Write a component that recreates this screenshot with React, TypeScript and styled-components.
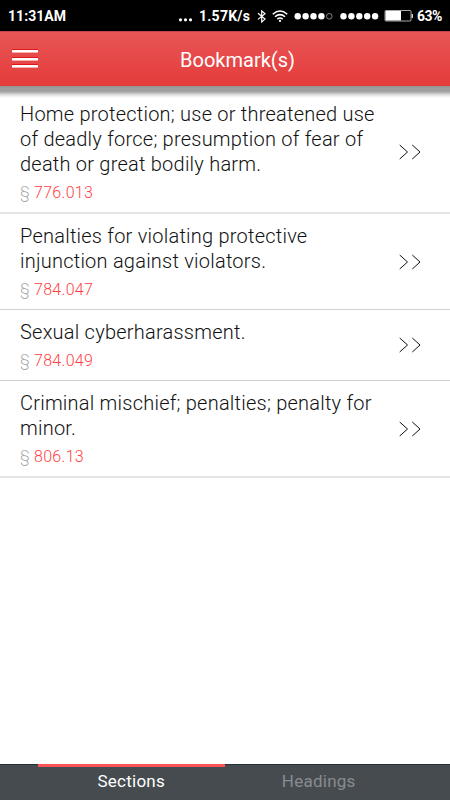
import React from 'react';
import styled, { createGlobalStyle } from 'styled-components';

const GlobalStyle = createGlobalStyle`
  * { box-sizing: border-box; }
  body { margin: 0; background: #fff; font-family: Roboto, sans-serif; }
`;

const Screen = styled.div`
  width: 450px;
  height: 800px;
  display: flex;
  flex-direction: column;
  overflow: hidden;
  background: #fff;
`;

const StatusBar = styled.div`
  flex: none;
  height: 31px;
  padding: 2px 8px 0;
  display: flex;
  align-items: center;
  background: #000;
  color: #fff;
  font-size: 14px;
  font-weight: 700;
  line-height: 29px;
  white-space: nowrap;
`;

const Clock = styled.span`
  flex: 1;
  letter-spacing: 0.05px;
`;

const Speed = styled.span`
  width: 51px;
  margin-left: 6px;
  letter-spacing: 0.25px;
`;

const StatusIcon = styled.svg<{ $gap: number }>`
  display: block;
  flex: none;
  margin-left: ${(p) => p.$gap}px;
`;

const Percent = styled.span`
  width: 25px;
  margin-left: 3px;
  font-size: 14px;
  letter-spacing: -0.55px;
`;

const Header = styled.header`
  flex: none;
  height: 55px;
  display: grid;
  grid-template-columns: 25px 1fr;
  align-items: center;
  padding: 1px 12px 0;
  color: #fff;
  background: linear-gradient(#e85555, #e53b3b);
  border-top: 1px solid #c94646;
`;

const MenuButton = styled.button`
  width: 26px;
  height: 19px;
  margin-bottom: 2px;
  padding: 0;
  border: 0;
  background: none;
  display: flex;
  flex-direction: column;
  justify-content: space-between;
`;

const MenuLine = styled.span`
  height: 4px;
  width: 26px;
  background: #fff;
  border-top: 1px solid #df1717;
  border-bottom: 1px solid #f8b0b0;
`;

const Title = styled.h1`
  margin: 0;
  text-align: center;
  font-size: 20px;
  font-weight: 400;
  letter-spacing: 0;
  line-height: 24px;
`;

const HeaderShadow = styled.div`
  flex: none;
  height: 12px;
  margin-bottom: -6px;
  background: linear-gradient(#929292 0, #9e9e9e 2px, #a0a0a0 5px, #a8a8a8 6px, #d2d2d2 8px, #eeeeee 10px, #fff 12px);
`;

const List = styled.ul`
  flex: 1;
  margin: 0;
  padding: 0;
  list-style: none;
`;

const Row = styled.li<{ $height: number; $softRule: boolean }>`
  height: ${(p) => p.$height}px;
  padding: 10px 28px 0 20px;
  display: flex;
  justify-content: space-between;
  border-bottom: ${(p) => (p.$softRule ? '2px solid #e4e4e4' : '1px solid #d0d0d0')};
`;

const RowTitle = styled.div`
  color: #111;
  font-size: 20px;
  font-weight: 300;
  letter-spacing: 0.23px;
  line-height: 25px;
  white-space: pre-line;
`;

const Citation = styled.div`
  margin-top: 6px;
  color: #ff3f45;
  font-size: 16px;
  font-weight: 300;
  letter-spacing: 0.3px;
  line-height: 19px;
`;

const SectionMark = styled.span`
  display: inline-block;
  width: 14px;
  color: #aaa;
`;

const Chevrons = styled.svg`
  flex: none;
  align-self: center;
  margin-top: -10px;
`;

const TabBar = styled.nav`
  flex: none;
  height: 36px;
  padding: 0 37.5px;
  display: grid;
  grid-template-columns: 1fr 1fr;
  background: #464b4f;
  border-top: 1px solid #233038;
`;

const Tab = styled.button<{ $active?: boolean }>`
  height: 36px;
  margin: -1px 0 0;
  padding: 0 0 5px;
  border: 0;
  border-top: ${(p) => (p.$active ? '3px solid #fb5558' : '3px solid transparent')};
  background: none;
  color: ${(p) => (p.$active ? '#fff' : '#888c90')};
  font: 400 17px/28px Roboto, sans-serif;
  letter-spacing: 0.25px;
`;

const bookmarks = [
  { title: 'Home protection; use or threatened use\nof deadly force; presumption of fear of\ndeath or great bodily harm.', code: '776.013', height: 122, softRule: true },
  { title: 'Penalties for violating protective\ninjunction against violators.', code: '784.047', height: 96, softRule: false },
  { title: 'Sexual cyberharassment.', code: '784.049', height: 71, softRule: false },
  { title: 'Criminal mischief; penalties; penalty for\nminor.', code: '806.13', height: 97, softRule: true },
];

const dots = [0, 1, 2, 3, 4];

export default function App() {
  return (
    <Screen>
      <GlobalStyle />
      <StatusBar>
        <Clock>11:31AM</Clock>
        <StatusIcon $gap={0} width="15" height="16" fill="#fff">
          <circle cx="2.5" cy="10.8" r="1.6" />
          <circle cx="7.5" cy="10.8" r="1.6" />
          <circle cx="12.5" cy="10.8" r="1.6" />
        </StatusIcon>
        <Speed>1.57K/s</Speed>
        <StatusIcon $gap={7} width="10" height="14" fill="none" stroke="#fff" strokeWidth="1.2">
          <path d="M1 3.2 8 9.1 4.7 11.9V.9L8 3.7 1 9.4" />
        </StatusIcon>
        <StatusIcon $gap={5} width="16" height="14" fill="none" stroke="#fff" strokeWidth="1.5">
          <path d="M.7 4.2Q8-2.2 15.3 4.2M3 6.8Q8 2.4 13 6.8M5.3 9.2Q8 7 10.7 9.2" />
          <circle cx="8" cy="10.9" r="1.1" fill="#fff" stroke="none" />
        </StatusIcon>
        <StatusIcon $gap={6} width="40" height="10">
          {dots.map((n) => (
            <circle key={n} cx={3.7 + n * 7.9} cy="4.3" r={n < 4 ? 3.2 : 2.8} fill={n < 4 ? '#fff' : 'none'} stroke={n < 4 ? 'none' : '#888'} />
          ))}
        </StatusIcon>
        <StatusIcon $gap={6} width="39" height="10" fill="#fff">
          {dots.map((n) => (
            <circle key={n} cx={3.5 + n * 7.9} cy="4.3" r="3.2" />
          ))}
        </StatusIcon>
        <StatusIcon $gap={5} width="30" height="13">
          <rect x="1" y="0.5" width="26" height="10.5" rx="1" fill="none" stroke="#aaa" />
          <rect x="1.5" y="1" width="15.5" height="9.5" fill="#fff" />
          <rect x="27.5" y="4" width="1.5" height="4" fill="#ccc" />
        </StatusIcon>
        <Percent>63%</Percent>
      </StatusBar>
      <Header>
        <MenuButton aria-label="Menu">
          <MenuLine />
          <MenuLine />
          <MenuLine />
        </MenuButton>
        <Title>Bookmark(s)</Title>
      </Header>
      <HeaderShadow />
      <List>
        {bookmarks.map((b) => (
          <Row key={b.code} $height={b.height} $softRule={b.softRule}>
            <div>
              <RowTitle>{b.title}</RowTitle>
              <Citation>
                <SectionMark>§</SectionMark>
                {b.code}
              </Citation>
            </div>
            <Chevrons width="24" height="16" fill="none" stroke="#111" strokeWidth="1">
              <path d="M1.7 1 9.5 8 1.7 15M14.3 1l7.7 7-7.7 7" />
            </Chevrons>
          </Row>
        ))}
      </List>
      <TabBar>
        <Tab $active>Sections</Tab>
        <Tab>Headings</Tab>
      </TabBar>
    </Screen>
  );
}
